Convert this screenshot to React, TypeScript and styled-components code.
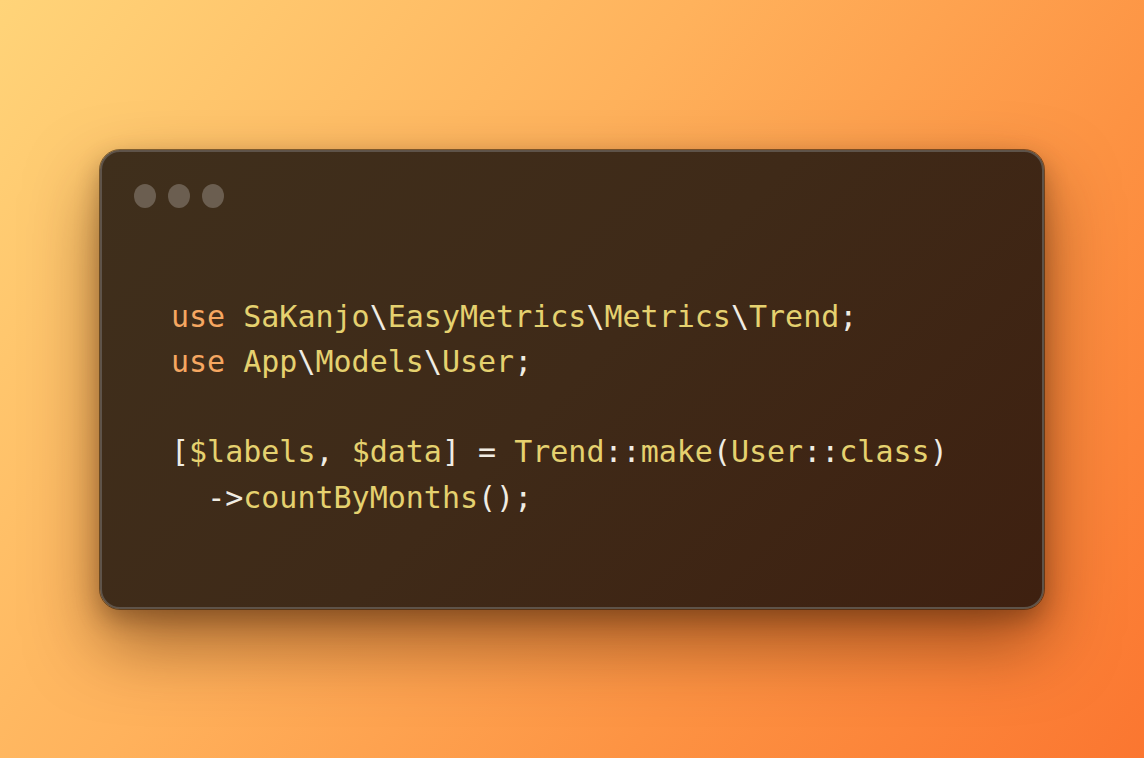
import React from "react";
import styled, { createGlobalStyle } from "styled-components";

const Global = createGlobalStyle`
  html, body { margin: 0; padding: 0; }
  body {
    width: 1144px;
    height: 758px;
    overflow: hidden;
    font-family: "DejaVu Sans Mono", "Liberation Mono", monospace;
  }
`;

const Page = styled.div`
  width: 1144px;
  height: 758px;
  display: flex;
  align-items: center;
  justify-content: center;
  background: linear-gradient(128deg, #ffd479 0%, #ffb25c 40%, #fd9343 70%, #fb7630 100%);
`;

const Window = styled.div`
  box-sizing: border-box;
  width: 944px;
  height: 459px;
  border-radius: 20px;
  border: 2px solid #5e5349;
  outline: 1px solid rgba(40, 25, 10, 0.55);
  background: linear-gradient(135deg, #3f2f1c 0%, #3f2a18 50%, #3e2010 100%);
  box-shadow: 0 34px 70px rgba(70, 25, 0, 0.5), 0 10px 24px rgba(40, 15, 0, 0.3);
  padding: 32px 32px;
  display: flex;
  flex-direction: column;
`;

const Dots = styled.div`
  display: flex;
  gap: 12px;
  height: 24px;
`;

const Dot = styled.span`
  width: 22px;
  height: 24px;
  border-radius: 50%;
  background: #6b5e50;
`;

const Code = styled.pre`
  margin: 86px 0 0 37px;
  font-family: "DejaVu Sans Mono", "Liberation Mono", monospace;
  font-size: 30px;
  line-height: 45.3px;
  color: #f0ece3;
  white-space: pre;
`;

const Kw = styled.span`
  color: #f6a761;
`;

const Id = styled.span`
  color: #e5d16f;
`;

export default function App() {
  return (
    <>
      <Global />
      <Page>
        <Window>
          <Dots>
            <Dot />
            <Dot />
            <Dot />
          </Dots>
          <Code>
            <Kw>use</Kw> <Id>SaKanjo</Id>\<Id>EasyMetrics</Id>\<Id>Metrics</Id>\<Id>Trend</Id>;{"\n"}
            <Kw>use</Kw> <Id>App</Id>\<Id>Models</Id>\<Id>User</Id>;{"\n"}
            {"\n"}
            [<Id>$labels</Id>, <Id>$data</Id>] = <Id>Trend</Id>::<Id>make</Id>(<Id>User</Id>::<Id>class</Id>){"\n"}
            {"  "}-&gt;<Id>countByMonths</Id>();
          </Code>
        </Window>
      </Page>
    </>
  );
}
